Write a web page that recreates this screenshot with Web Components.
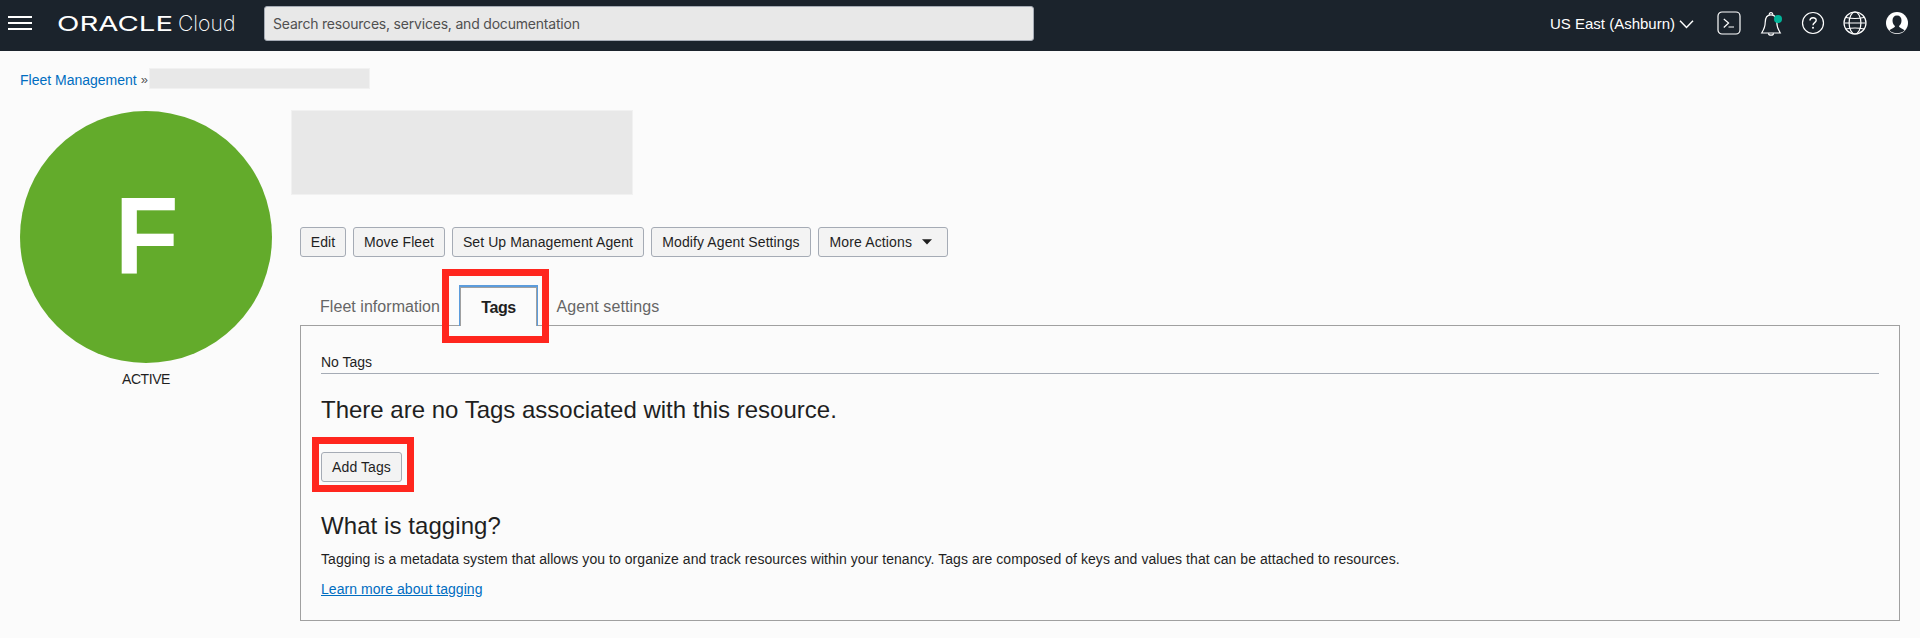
<!DOCTYPE html>
<html lang="en">
<head>
<meta charset="utf-8">
<title>Fleet Management</title>
<style>
html,body{margin:0;height:100%;background:#fbfbfb}
body{font-family:"Liberation Sans",Arial,sans-serif;font-size:14px;color:#1f1f1f;overflow:hidden}
</style>
</head>
<body>
<console-page></console-page>
<script>
const define=(name,html)=>customElements.define(name,class extends HTMLElement{
  constructor(){super();this.attachShadow({mode:'open'}).innerHTML=html;}
});

define('menu-icon',`<style>:host{display:block;width:24px;height:14px}i{display:block;height:2px;background:#fff;margin-bottom:4px}</style><i></i><i></i><i></i>`);

define('brand-logo',`<style>:host{display:block;width:190px;height:26px}svg{display:block;overflow:visible}</style>
<svg width="190" height="26" viewBox="0 0 190 26" fill="#fff">
<text x="0" y="19" font-family="Inter,sans-serif" font-weight="400" font-size="20.5" textLength="116" lengthAdjust="spacingAndGlyphs">ORACLE</text>
<text x="121" y="19" font-family="Inter,sans-serif" font-weight="250" font-size="21.5" textLength="57.5" lengthAdjust="spacingAndGlyphs">Cloud</text>
</svg>`);

define('search-box',`<style>:host{display:flex;align-items:center;box-sizing:border-box;width:770px;height:35px;padding:0 8px;background:#e8e8e8;border:1px solid #a5abb5;border-radius:3px;color:#505050;font-size:14px}span{font-family:Inter,sans-serif;letter-spacing:-.2px}</style><span><slot></slot></span>`);

define('tool-icons',`<style>:host{display:flex;align-items:center}svg{display:block;overflow:visible}</style>
<svg width="206" height="30" viewBox="0 0 206 30" fill="none" stroke="#fff" stroke-width="1.2">
<rect x="1" y="4" width="22" height="22" rx="4"/><path d="M6.800 11l4.800 4-4.800 4.500M11.500 19H17"/>
<path d="M44.700 25H63.300C60.800 21 59.800 19 59.800 14.500C59.800 9.500 57.800 6.800 54 6.800S48.200 9.500 48.200 14.500C48.200 19 47.200 21 44.700 25Z"/><path d="M52.300 6.700a1.700 2 0 0 1 3.400 0M51.500 25.200a2.500 2 0 0 0 5 0"/>
<circle cx="61" cy="11" r="4" fill="#00b398" stroke="none"/>
<circle cx="96" cy="15" r="10.500"/><path d="M93 12.500C93 8.800 99.200 8.800 99.200 12.300C99.200 14.700 96 14.500 96 17.200" stroke-width="1.400"/><circle cx="96" cy="19.700" r="1" fill="#fff" stroke="none"/>
<circle cx="138" cy="15" r="11"/><ellipse cx="138" cy="15" rx="5.900" ry="11"/><path d="M127 15H149M129 9.500Q138 11.500 147 9.500M129 21Q138 19 147 21"/>
<circle cx="180" cy="15" r="11" fill="#fff" stroke="none"/><path d="M180 7.500c-3 0-4.500 2-4.500 5 0 2.500 1 4.500 2.500 5.500 0 2-4 2.500-5.500 4.500 4 3.600 11 3.600 15 0-1.500-2-5.500-2.500-5.500-4.500 1.500-1 2.500-3 2.500-5.500 0-3-1.500-5-4.500-5Z" fill="#1b232c" stroke="none"/>
</svg>`);

define('top-bar',`<style>:host{display:flex;box-sizing:border-box;height:51px;background:#1b232c;padding:0 8px;color:#fff}
menu-icon{margin:16px 25px 0 0}brand-logo{margin:12px 17px 0 0}search-box{margin-top:6px}
.region{margin:15px 4px 0 auto;font-size:15px;line-height:18px;white-space:nowrap}.chev{margin:20px 23px 0 0}tool-icons{height:30px;margin-top:8px;width:195px}</style>
<menu-icon></menu-icon><brand-logo></brand-logo><search-box>Search resources, services, and documentation</search-box>
<span class="region">US East (Ashburn)</span><svg class="chev" width="15" height="9" viewBox="0 0 15 9" fill="none" stroke="#fff" stroke-width="1.500"><path d="M1 .8L7.500 7.500 14 .8"/></svg><tool-icons></tool-icons>`);

define('crumb-trail',`<style>:host{display:flex;height:20px;align-items:flex-start;padding:17px 0 0 20px;line-height:20px}a{color:#006dc1;text-decoration:none;margin-top:2px}.sep{margin:2px 0 0 4px;color:#555;font-size:13px;width:8px}.blank{box-sizing:border-box;width:221px;height:21px;background:#e8e8e8;border:1px solid #f1f1f1}</style>
<a>Fleet Management</a><span class="sep">»</span><span class="blank"></span>`);

define('status-badge',`<style>:host{display:flex;flex-direction:column;align-items:center;width:252px}.disc{width:252px;height:252px;border-radius:50%;background:#63ab2b;color:#fff;display:flex;align-items:center;justify-content:center;font-weight:bold;font-size:110px;line-height:1}.disc span{display:block;transform:translate(1px,-1px) scaleX(.95)}.label{margin-top:7px;line-height:18px;letter-spacing:-.45px}</style>
<div class="disc"><span>F</span></div><div class="label"><slot></slot></div>`);

define('ui-button',`<style>:host{display:inline-flex;box-sizing:border-box;height:30px;align-items:center;justify-content:center;border:1px solid #a5abb5;border-radius:3px;background:#f3f3f3;white-space:nowrap;line-height:18px;color:#1f1f1f;letter-spacing:.09px}</style><slot></slot>`);

define('red-frame',`<style>:host{display:block;box-sizing:border-box;border:7px solid #ff261e;pointer-events:none}</style>`);

define('tab-strip',`<style>:host{display:flex;height:50px;margin-top:18px;box-sizing:border-box;padding:0 0 0 20px;font-size:16px;line-height:20px;color:#666;white-space:nowrap;position:relative}
.a{width:139px;padding-top:22px;letter-spacing:.05px}.b{box-sizing:border-box;width:79px;height:41px;margin-top:10px;border:1px solid #5c9cdc;border-top-width:2px;border-bottom:0;box-shadow:inset 1px 1px #a0a0a0,inset -1px 0 #a0a0a0;background:#fbfbfb;color:#1f1f1f;font-weight:bold;letter-spacing:-.4px;text-align:center;padding-top:11px;z-index:1}.c{padding:22px 0 0 18.500px;letter-spacing:.1px}
red-frame{position:absolute;left:142px;top:-6px;width:107px;height:74px;z-index:2}</style>
<span class="a">Fleet information</span><span class="b">Tags</span><span class="c">Agent settings</span><red-frame></red-frame>`);

define('tags-panel',`<style>:host{display:flex;flex-direction:column;align-items:flex-start;box-sizing:border-box;height:296px;border:1px solid #a0a0a0;padding:27px 20px 0}
.none{align-self:stretch;line-height:18px;height:20px;border-bottom:1px solid #a5abb5}h2{font-weight:normal;font-size:24px;line-height:30px;margin:0}.first{margin-top:21px}.second{letter-spacing:.07px}.wrap{position:relative;margin:27px 0 29px}ui-button{width:81px}red-frame{position:absolute;left:-9px;top:-15px;width:102px;height:55px}p{margin:9px 0 12px;line-height:18px;white-space:nowrap;letter-spacing:.054px}a{color:#006dc1;text-decoration:underline;line-height:18px;letter-spacing:.05px}</style>
<div class="none">No Tags</div><h2 class="first">There are no Tags associated with this resource.</h2>
<div class="wrap"><ui-button>Add Tags</ui-button><red-frame></red-frame></div>
<h2 class="second">What is tagging?</h2><p>Tagging is a metadata system that allows you to organize and track resources within your tenancy. Tags are composed of keys and values that can be attached to resources.</p><a>Learn more about tagging</a>`);

define('fleet-detail',`<style>:host{display:block;width:1600px}.blank{box-sizing:border-box;width:342px;height:85px;background:#e8e8e8;border:1px solid #f1f1f1;margin:-1px 0 0 -9px}.row{display:flex;gap:7px;margin-top:32px}.row svg{margin-left:10px}.more{width:130px;justify-content:flex-start;padding-left:10.500px;letter-spacing:.14px}</style>
<div class="blank"></div><div class="row"><ui-button style="width:46px">Edit</ui-button><ui-button style="width:92px">Move Fleet</ui-button><ui-button style="width:192px">Set Up Management Agent</ui-button><ui-button style="width:160px">Modify Agent Settings</ui-button><ui-button class="more">More Actions<svg width="10" height="6"><path d="M0 .3H10L5 5.500Z" fill="#1f1f1f"/></svg></ui-button></div>
<tab-strip></tab-strip><tags-panel></tags-panel>`);

define('console-page',`<style>:host{display:block;width:1920px;height:638px;background:#fbfbfb}main{display:flex;padding:23px 0 0 20px}fleet-detail{margin-left:28px}</style>
<top-bar></top-bar><crumb-trail></crumb-trail><main><status-badge>ACTIVE</status-badge><fleet-detail></fleet-detail></main>`);
</script>
</body>
</html>
